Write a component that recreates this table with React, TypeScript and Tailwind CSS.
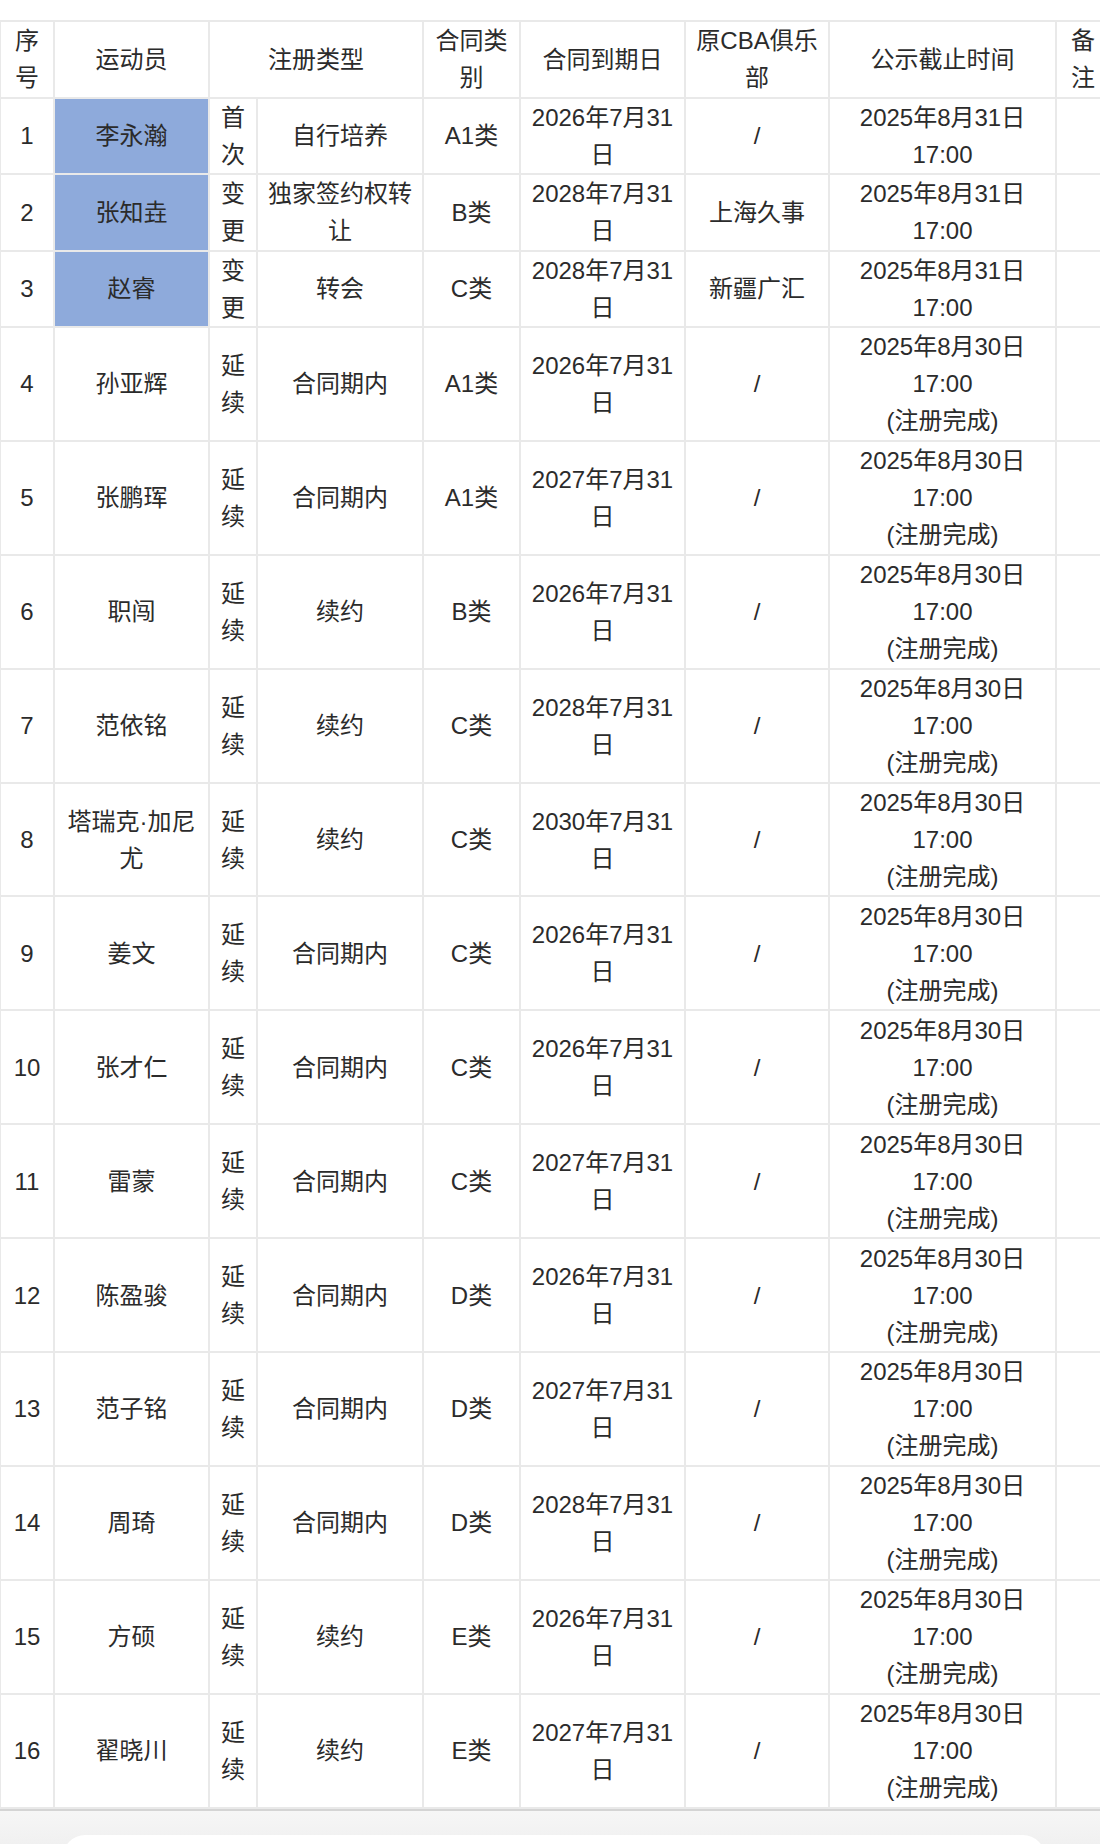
import React from "react";

type Row = {
  n: string;
  name: string[];
  hl?: boolean;
  t1: string[];
  t2: string[];
  c: string;
  exp: string;
  club: string;
  dl: string[];
};

const done = (d: string) => [d, "17:00", "(注册完成)"];

const rows: Row[] = [
  { n: "1", name: ["李永瀚"], hl: true, t1: ["首", "次"], t2: ["自行培养"], c: "A1类", exp: "2026年7月31", club: "/", dl: ["2025年8月31日", "17:00"] },
  { n: "2", name: ["张知垚"], hl: true, t1: ["变", "更"], t2: ["独家签约权转", "让"], c: "B类", exp: "2028年7月31", club: "上海久事", dl: ["2025年8月31日", "17:00"] },
  { n: "3", name: ["赵睿"], hl: true, t1: ["变", "更"], t2: ["转会"], c: "C类", exp: "2028年7月31", club: "新疆广汇", dl: ["2025年8月31日", "17:00"] },
  { n: "4", name: ["孙亚辉"], t1: ["延", "续"], t2: ["合同期内"], c: "A1类", exp: "2026年7月31", club: "/", dl: done("2025年8月30日") },
  { n: "5", name: ["张鹏珲"], t1: ["延", "续"], t2: ["合同期内"], c: "A1类", exp: "2027年7月31", club: "/", dl: done("2025年8月30日") },
  { n: "6", name: ["职闯"], t1: ["延", "续"], t2: ["续约"], c: "B类", exp: "2026年7月31", club: "/", dl: done("2025年8月30日") },
  { n: "7", name: ["范依铭"], t1: ["延", "续"], t2: ["续约"], c: "C类", exp: "2028年7月31", club: "/", dl: done("2025年8月30日") },
  { n: "8", name: ["塔瑞克·加尼", "尤"], t1: ["延", "续"], t2: ["续约"], c: "C类", exp: "2030年7月31", club: "/", dl: done("2025年8月30日") },
  { n: "9", name: ["姜文"], t1: ["延", "续"], t2: ["合同期内"], c: "C类", exp: "2026年7月31", club: "/", dl: done("2025年8月30日") },
  { n: "10", name: ["张才仁"], t1: ["延", "续"], t2: ["合同期内"], c: "C类", exp: "2026年7月31", club: "/", dl: done("2025年8月30日") },
  { n: "11", name: ["雷蒙"], t1: ["延", "续"], t2: ["合同期内"], c: "C类", exp: "2027年7月31", club: "/", dl: done("2025年8月30日") },
  { n: "12", name: ["陈盈骏"], t1: ["延", "续"], t2: ["合同期内"], c: "D类", exp: "2026年7月31", club: "/", dl: done("2025年8月30日") },
  { n: "13", name: ["范子铭"], t1: ["延", "续"], t2: ["合同期内"], c: "D类", exp: "2027年7月31", club: "/", dl: done("2025年8月30日") },
  { n: "14", name: ["周琦"], t1: ["延", "续"], t2: ["合同期内"], c: "D类", exp: "2028年7月31", club: "/", dl: done("2025年8月30日") },
  { n: "15", name: ["方硕"], t1: ["延", "续"], t2: ["续约"], c: "E类", exp: "2026年7月31", club: "/", dl: done("2025年8月30日") },
  { n: "16", name: ["翟晓川"], t1: ["延", "续"], t2: ["续约"], c: "E类", exp: "2027年7月31", club: "/", dl: done("2025年8月30日") },
];

const Lines = ({ l }: { l: string[] }) => (
  <>
    {l.map((s, i) => (
      <div key={i} className="whitespace-nowrap">
        {s}
      </div>
    ))}
  </>
);

const td = "border-2 border-[#e9e9e9] text-center align-middle p-0";

export default function App() {
  return (
    <div
      className="w-[1100px] h-[1844px] overflow-hidden bg-white text-[#2b2b2b] text-[24px] leading-[37px]"
      style={{ fontFamily: '"Liberation Sans", "Noto Sans CJK SC", sans-serif' }}
    >
      <div className="h-[20px]" />
      <table className="table-fixed border-collapse w-[1120px] -ml-[1px]">
        <colgroup>
          <col className="w-[54px]" />
          <col className="w-[155px]" />
          <col className="w-[48px]" />
          <col className="w-[166px]" />
          <col className="w-[97px]" />
          <col className="w-[165px]" />
          <col className="w-[144px]" />
          <col className="w-[227px]" />
          <col className="w-[64px]" />
        </colgroup>
        <thead>
          <tr className="h-[76.5px]">
            <th className={`${td} font-normal`}><Lines l={["序", "号"]} /></th>
            <th className={`${td} font-normal`}>运动员</th>
            <th className={`${td} font-normal`} colSpan={2}>注册类型</th>
            <th className={`${td} font-normal`}><Lines l={["合同类", "别"]} /></th>
            <th className={`${td} font-normal`}>合同到期日</th>
            <th className={`${td} font-normal`}><Lines l={["原CBA俱乐", "部"]} /></th>
            <th className={`${td} font-normal`}>公示截止时间</th>
            <th className={`${td} font-normal text-left pl-[14px]`}><Lines l={["备", "注"]} /></th>
          </tr>
        </thead>
        <tbody>
          {rows.map((r) => (
            <tr key={r.n} className={r.dl.length === 3 ? "h-[113.9px]" : "h-[76.5px]"}>
              <td className={td}>{r.n}</td>
              <td className={`${td} ${r.hl ? "bg-[#8eaadb]" : ""}`}><Lines l={r.name} /></td>
              <td className={td}><Lines l={r.t1} /></td>
              <td className={td}><Lines l={r.t2} /></td>
              <td className={td}>{r.c}</td>
              <td className={td}><Lines l={[r.exp, "日"]} /></td>
              <td className={td}>{r.club}</td>
              <td className={td}><Lines l={r.dl} /></td>
              <td className={td}></td>
            </tr>
          ))}
        </tbody>
      </table>
      <div className="relative h-[60px] border-t-2 border-[#d4d4d4] bg-gradient-to-b from-[#f6f6f6] to-[#ececec]">
        <div className="absolute left-[63px] right-[55px] top-[24px] h-[60px] rounded-t-[22px] bg-white" />
      </div>
    </div>
  );
}
